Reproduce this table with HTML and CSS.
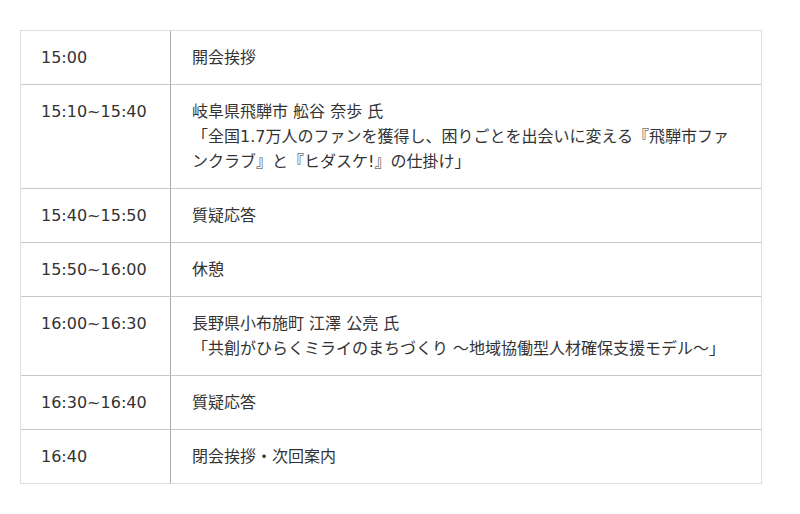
FILE: index.html
```html
<!DOCTYPE html>
<html lang="ja">
<head>
<meta charset="utf-8">
<link rel="stylesheet" href="styles.css">
</head>
<body>
<table class="schedule">
  <tbody>
    <tr><td class="time">15:00</td><td class="item">開会挨拶</td></tr>
    <tr><td class="time">15:10~15:40</td><td class="item">岐阜県飛騨市 舩谷 奈歩 氏<br>「全国1.7万人のファンを獲得し、困りごとを出会いに変える『飛騨市ファンクラブ』と『ヒダスケ!』の仕掛け」</td></tr>
    <tr><td class="time">15:40~15:50</td><td class="item">質疑応答</td></tr>
    <tr><td class="time">15:50~16:00</td><td class="item">休憩</td></tr>
    <tr><td class="time">16:00~16:30</td><td class="item">長野県小布施町 江澤 公亮 氏<br>「共創がひらくミライのまちづくり 〜地域協働型人材確保支援モデル〜」</td></tr>
    <tr><td class="time">16:30~16:40</td><td class="item">質疑応答</td></tr>
    <tr><td class="time">16:40</td><td class="item">閉会挨拶・次回案内</td></tr>
  </tbody>
</table>
</body>
</html>
```

FILE: styles.css
```css
html, body {
  margin: 0;
  background: #fff;
}
body {
  padding: 30px 20px;
  font-family: "DejaVu Sans", "Noto Sans CJK JP", sans-serif;
  font-size: 16px;
  line-height: 25px;
  color: #333;
}
.schedule {
  width: 742px;
  border-collapse: separate;
  border-spacing: 0;
  border: 1px solid #ddd;
}
.schedule td {
  padding: 14px 20px;
  vertical-align: top;
  border-top: 1px solid #c8c8c8;
}
.schedule tr:first-child td {
  border-top: none;
}
.schedule .time {
  width: 109px;
  border-right: 1px solid #aaa;
  white-space: nowrap;
}
.schedule .item {
  padding-left: 21px;
  padding-right: 26px;
}
```
